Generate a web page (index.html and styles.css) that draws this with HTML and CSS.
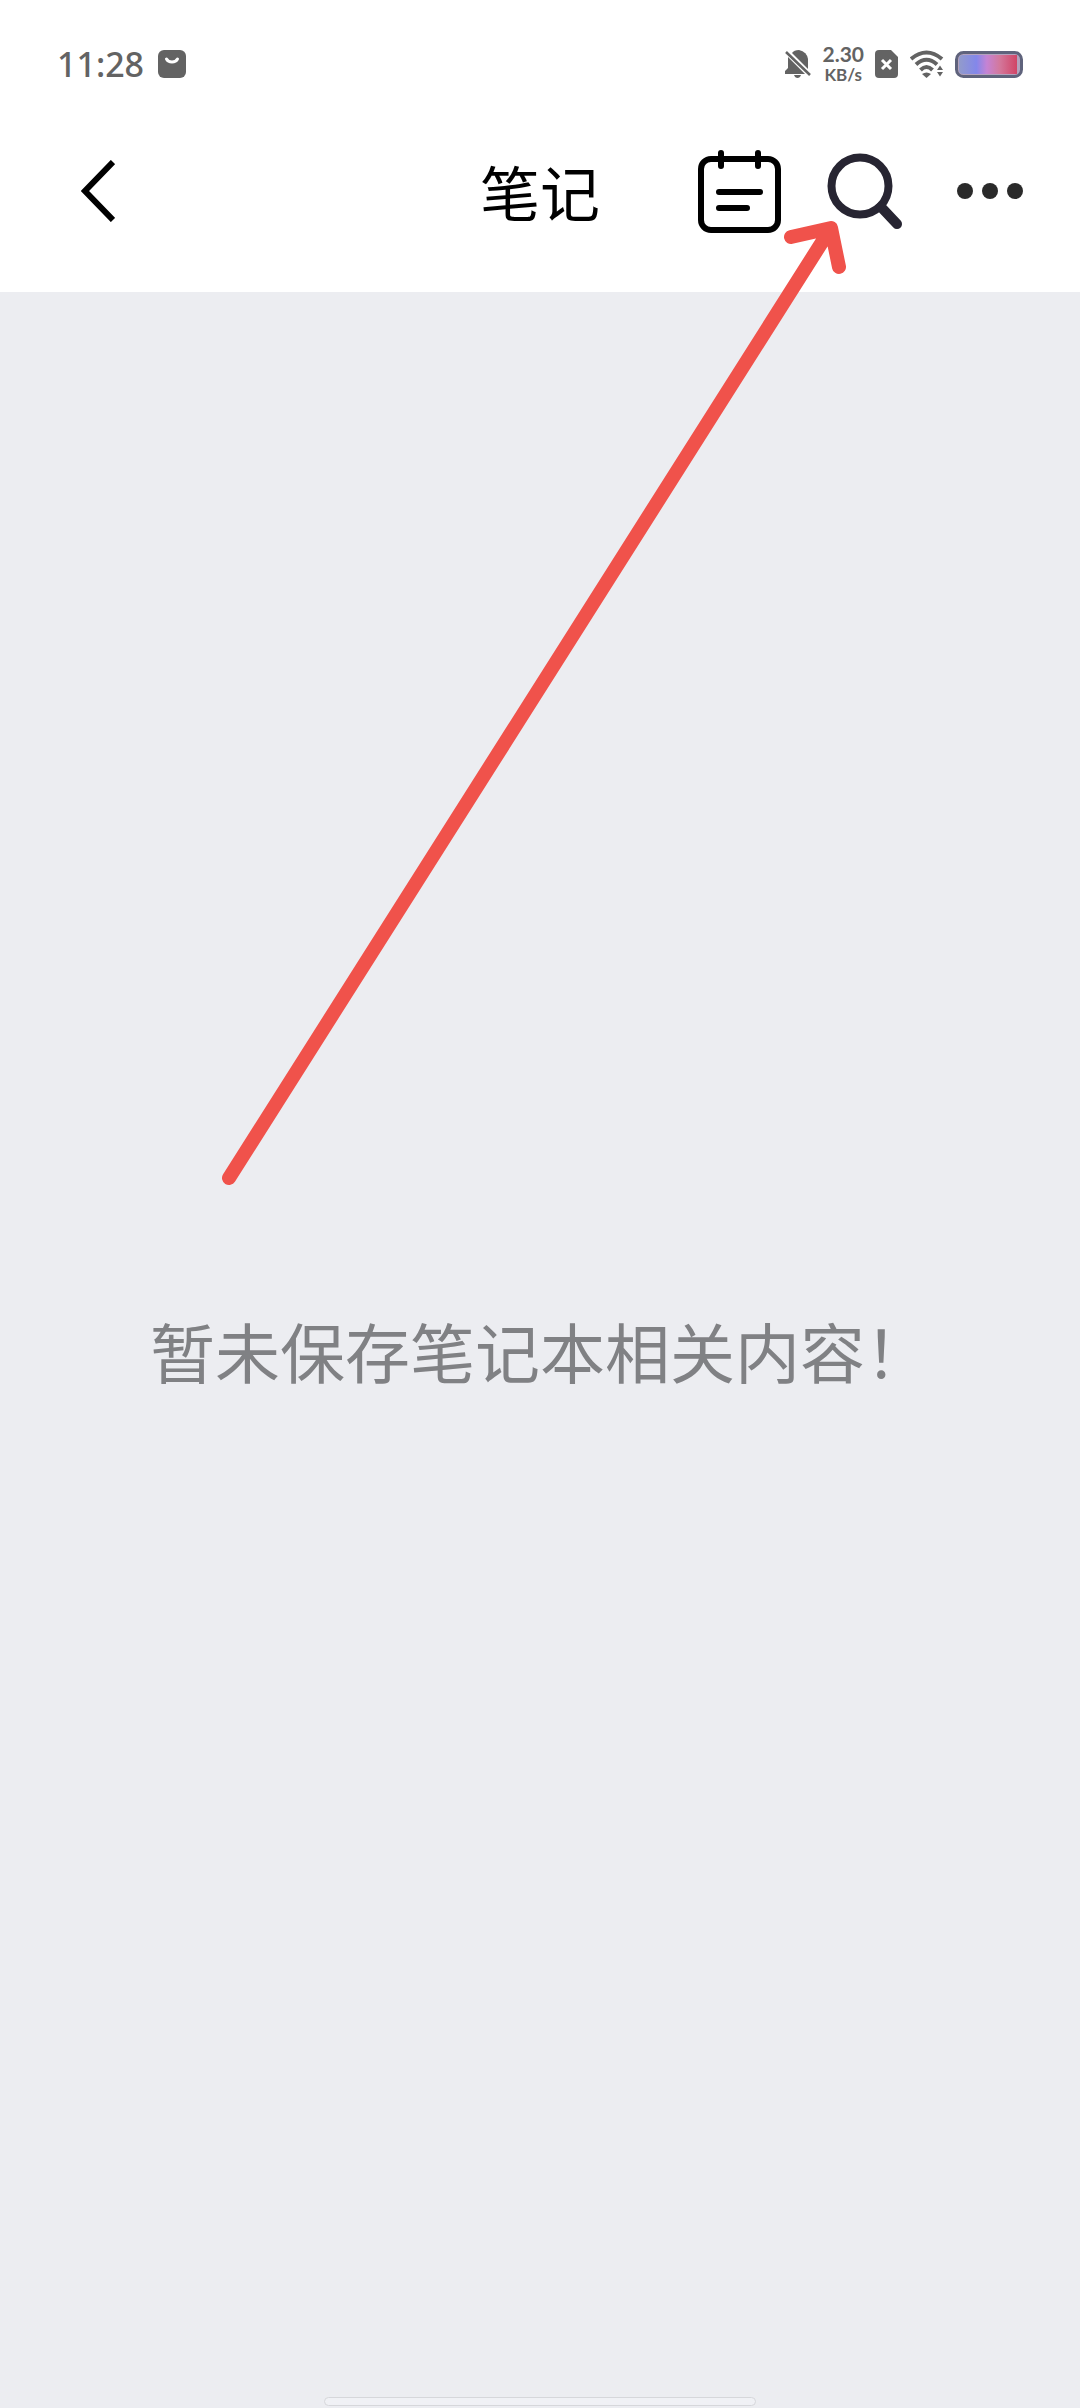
FILE: index.html
```
<!DOCTYPE html>
<html lang="zh-CN">
<head>
  <meta charset="UTF-8" />
  <meta name="viewport" content="width=device-width, initial-scale=1.0"/>
  <title>笔记</title>
  <link rel="stylesheet" href="styles.css">
</head>
<body>

  <!-- Status bar -->
  <div class="status-bar">
    <div class="status-left">
      <span class="clock">11:28</span>
      <svg width="28" height="28" viewBox="0 0 28 28">
        <rect width="28" height="28" rx="6" fill="#636363"/>
        <path d="M8.500 9a6 5 0 0 0 11 0" fill="none" stroke="#fff" stroke-width="3" stroke-linecap="round"/>
      </svg>
    </div>
    <div class="status-right">
      <svg width="26" height="28" viewBox="0 0 26 28" fill="#636363">
        <path d="M7 3Q9 0 14 0Q22 2 23 9V19L7 3z"/>
        <path d="M3 7L20 24H0V21L3 18z"/>
        <path d="M9 25h7q-1 3-3.500 3T9 25z"/>
        <path d="M1 2L25 25" stroke="#636363" stroke-width="2.500"/>
      </svg>
      <div class="net-speed">
        <span class="speed-value">2.30</span>
        <span class="speed-unit">KB/s</span>
      </div>
      <svg width="24" height="28" viewBox="0 0 24 28">
        <path d="M4 0h12l7 7v17a4 4 0 0 1-4 4H4a4 4 0 0 1-4-4V4a4 4 0 0 1 4-4z" fill="#636363"/>
        <path d="M7 10l9 9M16 10l-9 9" stroke="#fff" stroke-width="3"/>
      </svg>
      <svg width="34" height="28" viewBox="0 0 34 28">
        <g fill="none" stroke="#636363" stroke-width="4">
          <path d="M1 9Q16.500-4 32 9"/>
          <path d="M6 14.500Q16.500 5 27 14.500"/>
          <path d="M10.500 20Q16.500 14 22.500 20"/>
        </g>
        <path d="M12 24q4.500-3 9 0l-4.500 4z" fill="#636363"/>
        <path d="M27 20l3-4.500 3 4.500zM27 22h6l-3 4.500z" fill="#636363"/>
      </svg>
      <svg class="battery" width="68" height="27" viewBox="0 0 68 27">
        <defs>
          <linearGradient id="charge">
            <stop offset="0" stop-color="#929bcb"/>
            <stop offset="0.300" stop-color="#8387ea"/>
            <stop offset="0.480" stop-color="#c583d4"/>
            <stop offset="0.700" stop-color="#d3789c"/>
            <stop offset="1" stop-color="#d14466"/>
          </linearGradient>
        </defs>
        <rect x="1.500" y="1.500" width="65" height="24" rx="7" fill="#b3a2bd" stroke="#5f637c" stroke-width="3"/>
        <path d="M8 4h54v19H8a4 4 0 0 1-4-4V8a4 4 0 0 1 4-4z" fill="url(#charge)"/>
      </svg>
    </div>
  </div>

  <!-- Title bar -->
  <header class="title-bar">
    <button class="icon-button back-button" aria-label="返回">
      <svg width="34" height="62" viewBox="0 0 34 62">
        <path d="M32 2L4 31l28 29" fill="none" stroke="#000" stroke-width="6"/>
      </svg>
    </button>
    <h1>笔记</h1>
    <div class="actions">
      <button class="icon-button" aria-label="日历">
        <svg width="84" height="84" viewBox="0 0 84 84" fill="none" stroke="#000" stroke-width="6" stroke-linecap="round">
          <rect x="3" y="10" width="77" height="71" rx="10"/>
          <path d="M23 4v13M60 4v13M21 43h41M21 59h28"/>
        </svg>
      </button>
      <button class="icon-button" aria-label="搜索">
        <svg width="76" height="76" viewBox="0 0 76 76" fill="none" stroke="#272532" stroke-linecap="round">
          <circle cx="33" cy="33" r="28.500" stroke-width="8"/>
          <path d="M54 54l16 17" stroke-width="10"/>
        </svg>
      </button>
      <button class="icon-button more-button" aria-label="更多">
        <svg width="66" height="16" viewBox="0 0 66 16" fill="#2a2a2a">
          <circle cx="8" cy="8" r="8"/>
          <circle cx="33" cy="8" r="8"/>
          <circle cx="58" cy="8" r="8"/>
        </svg>
      </button>
    </div>
  </header>

  <main class="content">
    <p class="empty-text">暂未保存笔记本相关内容！</p>
  </main>

  <div class="home-indicator"></div>

  <!-- Arrow pointing at the search button -->
  <svg class="arrow" viewBox="0 0 1080 1200" fill="none" stroke="#f0524b" stroke-width="14" stroke-linecap="round" stroke-linejoin="round">
    <path d="M229 1178L831 228M791 237L831 228L839 267"/>
  </svg>

</body>
</html>
```
FILE: styles.css
```
* {
  box-sizing: border-box;
}

body {
  margin: 0;
  min-height: 100vh;
  display: flex;
  flex-direction: column;
  position: relative;
  background-color: #ecedf1;
  font-family: "Noto Sans", "Noto Sans CJK SC", sans-serif;
}

svg {
  display: block;
}

.status-bar {
  display: flex;
  justify-content: space-between;
  align-items: center;
  height: 128px;
  padding: 0 57px;
  background-color: #fff;
  color: #636363;
}

.status-left {
  display: flex;
  align-items: center;
  gap: 14px;
}

.clock {
  font-size: 34px;
  line-height: 40px;
  font-weight: 500;
}

.status-right {
  display: flex;
  align-items: center;
  gap: 11px;
}

.net-speed {
  display: flex;
  flex-direction: column;
  align-items: center;
  font-family: Lato, sans-serif;
  font-weight: 700;
}

.speed-value {
  font-size: 21px;
  line-height: 22px;
}

.speed-unit {
  font-size: 17px;
  line-height: 20px;
}

.title-bar {
  display: grid;
  grid-template-columns: 1fr auto 1fr;
  align-items: center;
  height: 164px;
  padding: 0 57px 38px;
  background-color: #fff;
}

h1 {
  margin: 0;
  font-family: "Noto Sans CJK SC", sans-serif;
  font-size: 60px;
  line-height: 72px;
  font-weight: 400;
  color: #000;
}

.icon-button {
  padding: 0;
  border: none;
  background: none;
  cursor: pointer;
}

.back-button {
  justify-self: start;
  padding-left: 24px;
}

.actions {
  display: flex;
  justify-content: flex-end;
  align-items: center;
  gap: 45px;
}

.more-button {
  padding-left: 9px;
}

.content {
  flex: 1;
  display: flex;
  justify-content: center;
  align-items: center;
}

.empty-text {
  margin: 0;
  font-family: "Noto Sans CJK SC", sans-serif;
  font-size: 65px;
  line-height: 96px;
  color: #808184;
}

.home-indicator {
  position: absolute;
  bottom: 2px;
  left: 30%;
  right: 30%;
  height: 9px;
  border: 1px solid #d6d7db;
  border-radius: 5px;
  background-color: #f0f1f5;
}

.arrow {
  position: absolute;
  top: 0;
  left: 0;
  width: 100%;
  pointer-events: none;
}
```
